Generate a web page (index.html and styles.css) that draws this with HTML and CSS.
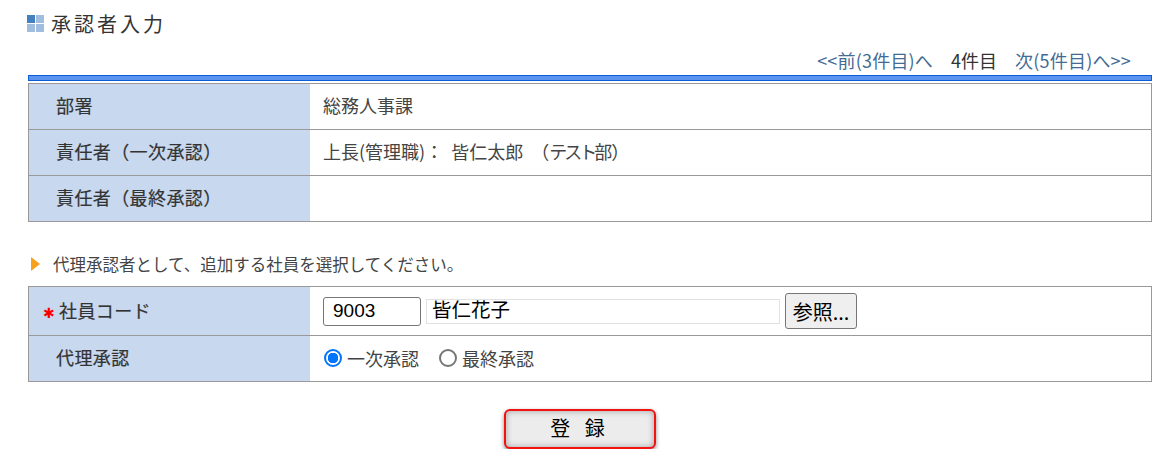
FILE: index.html
```html
<!DOCTYPE html>
<html lang="ja">
<head>
    <meta charset="UTF-8">
    <title>承認者入力</title>
    <link rel="stylesheet" href="styles.css">
</head>
<body>
    <div class="page">
        <h1 class="page-title">
            <span class="title-icon"><i class="dark"></i><i></i><i></i><i></i></span>
            <span class="title-text">承認者入力</span>
        </h1>

        <div class="pager">
            <a href="#">&lt;&lt;前(3件目)へ</a>
            <span class="current">4件目</span>
            <a href="#">次(5件目)へ&gt;&gt;</a>
        </div>
        <div class="blue-bar"></div>

        <table class="info-table">
            <tr><th>部署</th><td>総務人事課</td></tr>
            <tr><th>責任者（一次承認）</th><td>上長(管理職)： 皆仁太郎 （<span class="kana">テスト部</span>）</td></tr>
            <tr><th>責任者（最終承認）</th><td></td></tr>
        </table>

        <p class="guide"><span class="arrow"></span>代理承認者として、追加する社員を選択してください。</p>

        <table class="info-table form-table">
            <tr class="row-code">
                <th><span class="required">✱</span>社員コード</th>
                <td>
                    <div class="code-cell">
                        <input class="code-input" type="text" value="9003">
                        <input class="name-input" type="text" value="皆仁花子" readonly>
                        <button class="ref-btn" type="button">参照...</button>
                    </div>
                </td>
            </tr>
            <tr class="row-proxy">
                <th>代理承認</th>
                <td>
                    <label class="radio"><input type="radio" name="proxy" checked>一次承認</label>
                    <label class="radio"><input type="radio" name="proxy">最終承認</label>
                </td>
            </tr>
        </table>

        <div class="submit-row">
            <button class="submit-btn" type="button">登 録</button>
        </div>
    </div>
</body>
</html>
```

FILE: styles.css
```css
body {
    margin: 0;
    background: #fff;
    color: #333;
    font-family: "Noto Sans CJK JP", "Liberation Sans", sans-serif;
    font-size: 18px;
}

.page {
    width: 1124px;
    margin-left: 28px;
}

.page-title {
    display: flex;
    align-items: center;
    height: 25px;
    margin: 0;
    padding-top: 11px;
    padding-bottom: 2px;
    font-size: 20px;
    font-weight: normal;
    letter-spacing: 3px;
}

.title-icon {
    display: grid;
    grid-template-columns: 8px 8px;
    gap: 1px;
    margin: 0 7px 0 -1px;
}

.title-icon i {
    height: 8px;
    background: #a0bcdf;
}

.title-icon i.dark {
    background: #4380c0;
}

.pager {
    display: flex;
    justify-content: flex-end;
    gap: 18px;
    height: 24px;
    margin-top: 10px;
    padding-right: 21px;
    line-height: 24px;
}

.pager a {
    color: #446b94;
    letter-spacing: 0.2px;
    text-decoration: none;
}

.blue-bar {
    height: 6px;
    margin-top: 3px;
    box-sizing: border-box;
    border: 1px solid #0a5fd8;
    background: #5b93ee;
}

.info-table {
    width: 100%;
    margin-top: 2px;
    border-collapse: collapse;
    border: 1px solid #999;
}

.info-table tr {
    height: 46px;
}

.info-table th,
.info-table td {
    padding: 0 0 3px;
    border-top: 1px solid #999;
    border-bottom: 1px solid #999;
    font-weight: normal;
    text-align: left;
}

.info-table th {
    width: 254px;
    padding-left: 27px;
    background: #c8d8ee;
    letter-spacing: 0.4px;
    -webkit-text-stroke: 0.2px #333;
}

.info-table td {
    padding-left: 13px;
    color: #444;
    word-spacing: 4px;
}

.kana {
    margin-right: 2px;
    letter-spacing: -3px;
}

.guide {
    display: flex;
    align-items: center;
    height: 24px;
    margin: 30px 0 10px;
    color: #444;
    font-size: 16.5px;
}

.arrow {
    width: 0;
    height: 0;
    margin: 0 13px 0 3px;
    border-left: 9px solid #f9a01c;
    border-top: 7px solid transparent;
    border-bottom: 7px solid transparent;
}

.form-table {
    margin-top: 0;
}

.form-table .row-code {
    height: 49px;
}

.form-table td {
    padding-bottom: 0;
}

.required {
    display: inline-block;
    width: 16px;
    margin-left: -13px;
    color: #f00;
    font-family: "DejaVu Sans", sans-serif;
    font-size: 14px;
    text-align: left;
    -webkit-text-stroke: 0;
}

.code-cell {
    display: flex;
    align-items: center;
    gap: 5px;
}

.code-input {
    box-sizing: border-box;
    width: 98px;
    height: 29px;
    padding: 0 9px;
    border: 1px solid #767676;
    border-radius: 3px;
    color: #000;
    font-family: "Liberation Sans", sans-serif;
    font-size: 19px;
}

.name-input {
    box-sizing: border-box;
    width: 354px;
    height: 25px;
    padding: 0 6px 6px 5px;
    border: 1px solid #e2e2e2;
    color: #000;
    font-family: "Noto Sans CJK JP", sans-serif;
    font-size: 19.5px;
    outline: none;
}

.ref-btn {
    box-sizing: border-box;
    width: 72px;
    height: 36px;
    padding: 0;
    border: 1px solid #767676;
    border-radius: 3px;
    background: #efefef;
    color: #000;
    font-family: "Noto Sans CJK JP", sans-serif;
    font-size: 20px;
}

.radio {
    display: inline-flex;
    align-items: center;
    margin-right: 11px;
}

.radio input {
    appearance: none;
    box-sizing: border-box;
    width: 18px;
    height: 18px;
    margin: 0 5px 0 1px;
    border: 2px solid #767676;
    border-radius: 50%;
    background: #fff;
}

.radio input:checked {
    border-color: #0075ff;
    background: radial-gradient(circle, #0075ff 0 5px, #fff 5.5px);
}

.submit-row {
    display: flex;
    justify-content: center;
    margin-top: 27px;
    padding-right: 21px;
}

.submit-btn {
    box-sizing: border-box;
    width: 152px;
    height: 40px;
    padding: 0 4px 4px 0;
    border: 2px solid #f31212;
    border-radius: 6px;
    background: #ececec;
    box-shadow: inset 0 0 6px #a0a0a0, 0 2px 4px #888;
    color: #000;
    font-family: "Noto Sans CJK JP", sans-serif;
    font-size: 20px;
    word-spacing: 10px;
}
```
